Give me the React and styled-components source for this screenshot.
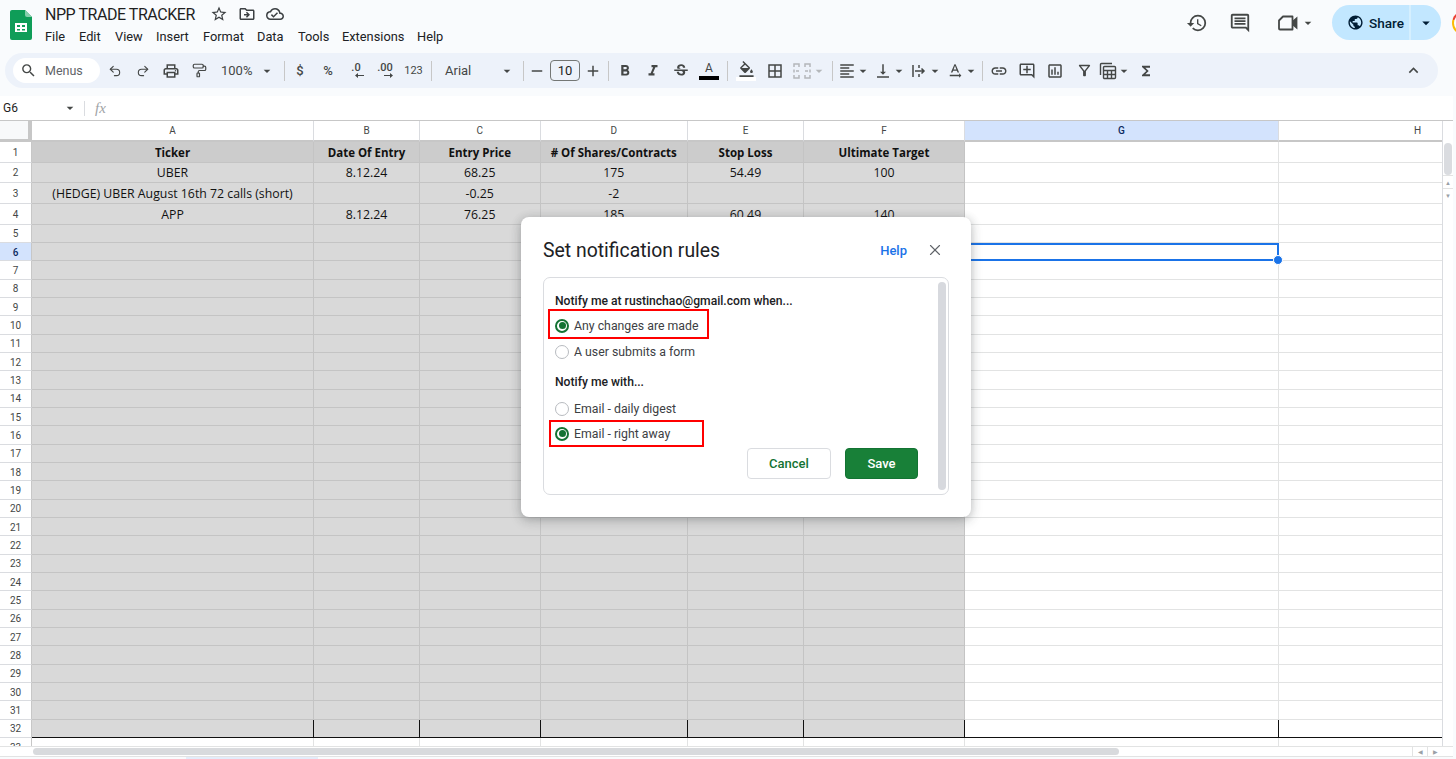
import React from 'react'
import styled, { createGlobalStyle } from 'styled-components'
import { Undo2, Redo2, PaintRoller, X } from 'lucide-react'
import {
  MdStarBorder, MdOutlineDriveFileMove, MdOutlineCloudDone, MdHistory, MdOutlineComment, MdPublic,
  MdSearch, MdOutlinePrint, MdArrowDropDown, MdAdd, MdRemove,
  MdFormatBold, MdFormatItalic, MdStrikethroughS, MdOutlineFormatColorFill, MdBorderAll,
  MdFormatAlignLeft, MdVerticalAlignBottom, MdTextRotationNone, MdLink, MdOutlineAddComment,
  MdOutlineInsertChart, MdOutlineFilterAlt, MdFunctions, MdExpandLess,
} from 'react-icons/md'

const GlobalStyle = createGlobalStyle`
  html, body { margin: 0; height: 100%; overflow: hidden; background: #f9fbfd; }
  #root { height: 100%; }
  * { box-sizing: border-box; }
`;

const Page = styled.div`
  width: 1456px;
  height: 759px;
  overflow: hidden;
  display: flex;
  flex-direction: column;
  background: #f9fbfd;
  font-family: Roboto, "Liberation Sans", sans-serif;
  color: #1f1f1f;
  position: relative;
`;

/* top header */
const Header = styled.header`
  height: 53px;
  flex: none;
  display: flex;
  padding-left: 10px;
`;
const LogoBox = styled.div`
  width: 22px;
  height: 30px;
  margin-top: 10px;
  flex: none;
`;
const DocInfo = styled.div`
  margin-left: 13px;
  display: flex;
  flex-direction: column;
`;
const TitleRow = styled.div`
  height: 28px;
  display: flex;
  align-items: center;
  color: #1f1f1f;
  svg { font-size: 18px; color: #3c4043; margin-left: 10px; }
`;
const Title = styled.div`
  font-size: 16px;
  width: 155px;
  white-space: nowrap;
  letter-spacing: -0.45px;
  padding-top: 1px;
`;
const MenuRow = styled.nav`
  display: flex;
  margin-top: 1px;
`;
const MenuItem = styled.div`
  font-size: 12.8px;
  line-height: 16px;
  width: ${p => p.$w}px;
  color: #202124;
`;
const HeaderRight = styled.div`
  margin-left: auto;
  margin-right: -20px;
  display: flex;
  align-items: flex-start;
  padding-top: 5px;
`;
const HeadIcon = styled.div`
  width: ${p => p.$w || 43}px;
  height: 35px;
  display: flex;
  align-items: center;
  justify-content: center;
  padding-left: ${p => p.$pl || 0}px;
  color: #444746;
  svg { font-size: 22px; }
  svg + svg { font-size: 16px; }
`;
const ShareBtn = styled.div`
  margin-left: 11px;
  width: 109px;
  height: 35px;
  display: flex;
  background: #c2e7ff;
  border-radius: 18px;
  overflow: hidden;
  color: #001d35;
`;
const ShareMain = styled.div`
  width: 79px;
  display: flex;
  align-items: center;
  padding-left: 15px;
  gap: 5px;
  font-size: 13.6px;
  font-weight: 500;
  border-right: 2px solid #d5effe;
  svg { font-size: 17px; }
`;
const ShareCaret = styled.div`
  flex: 1;
  display: flex;
  align-items: center;
  justify-content: center;
  svg { font-size: 18px; }
`;
const Avatar = styled.div`
  margin: 6px 0 0 11px;
  width: 24px;
  height: 24px;
  border-radius: 50%;
  background: conic-gradient(#4285f4 0 30%, #34a853 30% 60%, #fbbc04 60% 80%, #ea4335 80% 100%);
  display: flex;
  align-items: center;
  justify-content: center;
  &::after { content: ''; width: 20px; height: 20px; border-radius: 50%; background: #fff; }
`;

/* toolbar */
const Toolbar = styled.div`
  height: 35px;
  flex: none;
  margin: 0 18px 0 5px;
  padding: 0 11px 0 8px;
  background: #edf2fa;
  border-radius: 18px;
  display: flex;
  align-items: center;
  color: #444746;
`;
const MenuSearch = styled.div`
  width: 87px;
  height: 25px;
  margin-right: 1px;
  background: #fff;
  border-radius: 13px;
  display: flex;
  align-items: center;
  padding-left: 7px;
  gap: 8px;
  font-size: 12.5px;
  color: #5f6368;
  svg { font-size: 17px; color: #444746; }
`;
const Tool = styled.div`
  width: ${p => p.$w || 28}px;
  height: 24px;
  flex: none;
  display: flex;
  align-items: center;
  justify-content: center;
  font-size: ${p => p.$fs || 13}px;
  font-weight: ${p => p.$fw || 400};
  color: ${p => p.$muted ? '#b4b7ba' : '#444746'};
  svg { font-size: ${p => p.$icon || 18}px; }
`;
const DropTool = styled(Tool)`
  justify-content: flex-start;
  width: ${p => p.$w || 36}px;
  svg + svg { font-size: 16px; margin-left: -1px; }
`;
const Sep = styled.div`
  width: 1px;
  height: 20px;
  flex: none;
  background: #c7c7c7;
  margin-left: ${p => p.$l ?? 5}px;
  margin-right: ${p => p.$r ?? 1}px;
`;
const ZoomBox = styled.div`
  width: 66px;
  padding-left: 8px;
  display: flex;
  align-items: center;
  font-size: 13px;
  svg { font-size: 16px; margin-left: 7px; }
`;
const FontBox = styled.div`
  width: 85px;
  padding-left: 12px;
  display: flex;
  align-items: center;
  justify-content: space-between;
  padding-right: 3px;
  font-size: 13px;
  svg { font-size: 16px; }
`;
const SizeBox = styled.div`
  width: 30px;
  height: 21px;
  margin: 0 1px;
  border: 1px solid #747775;
  border-radius: 4px;
  font-size: 13px;
  display: flex;
  align-items: center;
  justify-content: center;
  color: #1f1f1f;
`;
const Decimal = styled.div`
  display: flex;
  flex-direction: column;
  align-items: center;
  font-size: 11px;
  font-weight: 500;
  line-height: 10px;
  svg { display: block; margin-left: 6px; }
`;
const ColorA = styled.div`
  width: 20px;
  display: flex;
  flex-direction: column;
  align-items: center;
  font-size: 12px;
  line-height: 13px;
  &::after { content: ''; width: 20px; height: 4px; background: #000; margin-top: 1px; }
`;
const FillWrap = styled.div`
  display: flex;
  flex-direction: column;
  align-items: center;
  svg { font-size: 17px; }
  &::after { content: ''; width: 20px; height: 4px; background: #fff; margin-top: -1px; }
`;
const Collapse = styled(Tool)`
  margin-left: auto;
  svg { font-size: 19px; }
`;

/* formula bar */
const FormulaBar = styled.div`
  margin-top: 8px;
  height: 24px;
  flex: none;
  background: #fff;
  display: flex;
  align-items: center;
  margin-right: 3px;
  font-size: 12px;
  color: #1f1f1f;
`;
const NameBox = styled.div`
  width: 84px;
  padding: 0 6px 0 3px;
  display: flex;
  align-items: center;
  justify-content: space-between;
  svg { font-size: 16px; color: #444746; }
`;
const FormulaSep = styled.div`
  width: 1px;
  height: 15px;
  background: #dadce0;
`;
const Fx = styled.div`
  margin-left: 10px;
  font-family: "Liberation Serif", serif;
  font-style: italic;
  font-size: 15px;
  color: #a0a3a6;
`;

/* sheet grid */
const Sheet = styled.div`
  flex: none;
  height: 626px;
  margin-right: 3px;
  display: flex;
  background: #fff;
  border-top: 1px solid #c7c7c7;
  overflow: hidden;
`;
const GridColumn = styled.div`
  width: 1442px;
  flex: none;
  overflow: hidden;
`;
const Row = styled.div`
  display: grid;
  grid-template-columns: 32px 282px 106px 120.5px 147.5px 116px 161px 314px 164px;
  height: ${p => p.$h}px;
`;
const Corner = styled.div`
  background: #f8f9fa;
  border-right: 4px solid #c7c7c7;
  border-bottom: 3px solid #c7c7c7;
`;
const ColHead = styled.div`
  background: ${p => p.$active ? '#d3e3fd' : '#fff'};
  color: ${p => p.$active ? '#0b2a5f' : '#444746'};
  font-weight: ${p => p.$active ? 500 : 400};
  border-right: 1px solid #dadce0;
  border-bottom: 2px solid #c7c7c7;
  padding-left: ${p => p.$offset || 0}px;
  font-size: 10px;
  display: flex;
  align-items: center;
  justify-content: center;
`;
const RowHead = styled.div`
  background: ${p => p.$active ? '#d3e3fd' : '#fff'};
  color: ${p => p.$active ? '#0b2a5f' : '#444746'};
  font-weight: ${p => p.$active ? 500 : 400};
  border-right: 1px solid #c7c7c7;
  border-bottom: 1px solid #dadce0;
  padding-top: 1px;
  font-size: 10px;
  display: flex;
  align-items: center;
  justify-content: center;
`;
const Cell = styled.div`
  position: relative;
  z-index: ${p => p.$selected ? 2 : 'auto'};
  background: ${p => p.$head ? '#cccccc' : p.$fill ? '#d9d9d9' : '#fff'};
  border-right: 1px solid ${p => p.$edge ? '#111' : p.$fill ? '#c4c4c4' : '#e2e3e3'};
  border-bottom: 1px solid ${p => p.$edge ? '#111' : p.$fill ? '#c4c4c4' : '#e2e3e3'};
  padding-top: 1px;
  font-family: "Open Sans", "Liberation Sans", sans-serif;
  font-size: ${p => p.$head ? 11.5 : 12.3}px;
  font-weight: ${p => p.$head ? 700 : 400};
  color: #111;
  display: flex;
  align-items: center;
  justify-content: center;
  white-space: nowrap;
`;
const Selection = styled.div`
  position: absolute;
  inset: 0 -1px -1px 0;
  border: 2px solid #1a73e8;
  &::after {
    content: '';
    position: absolute;
    right: -6px;
    bottom: -6px;
    width: 8px;
    height: 8px;
    border-radius: 50%;
    background: #1a73e8;
    border: 1px solid #fff;
  }
`;
const VScroll = styled.div`
  flex: 1;
  display: flex;
  flex-direction: column;
  border-left: 1px solid #dadce0;
  padding-top: 22px;
`;
const VThumb = styled.div`
  width: 8px;
  height: 32px;
  margin-left: 1px;
  border-radius: 4px;
  background: #dadce0;
`;
const VArrow = styled.div`
  height: 13px;
  width: 10px;
  display: flex;
  align-items: center;
  justify-content: center;
  border-top: 1px solid #e2e3e3;
  color: #9aa0a6;
  font-size: 6px;
  &:first-of-type { margin-top: auto; }
`;
const HScroll = styled.div`
  height: 11px;
  flex: none;
  margin-right: 3px;
  background: #fff;
  border-top: 1px solid #e2e3e3;
  border-bottom: 1px solid #e2e3e3;
  display: flex;
  align-items: center;
  padding-left: 33px;
`;
const HThumb = styled.div`
  width: 1086px;
  height: 7px;
  border-radius: 4px;
  background: #d8dadd;
`;
const HArrows = styled.div`
  margin-left: auto;
  display: flex;
  height: 100%;
  margin-right: 11px;
`;
const HArrow = styled.div`
  width: 15px;
  display: flex;
  align-items: center;
  justify-content: center;
  border-left: 1px solid #e2e3e3;
  color: #9aa0a6;
  font-size: 6px;
`;
const TabHint = styled.div`
  width: 132px;
  height: 2px;
  margin-left: 186px;
  background: #e3ecfa;
`;

/* dialog */
const Dialog = styled.div`
  position: absolute;
  z-index: 10;
  left: 521px;
  top: 217px;
  width: 450px;
  height: 300px;
  background: #fff;
  border-radius: 8px;
  box-shadow: 0 2px 10px rgba(60, 64, 67, .3), 0 4px 14px rgba(60, 64, 67, .12);
  padding: 0 22px;
  display: flex;
  flex-direction: column;
`;
const DialogHead = styled.div`
  height: 60px;
  flex: none;
  display: flex;
  align-items: center;
  padding-top: 6px;
`;
const DialogTitle = styled.div`
  font-size: 19.4px;
  color: #202124;
`;
const HelpLink = styled.div`
  margin-left: auto;
  font-size: 13px;
  font-weight: 500;
  color: #1a73e8;
`;
const CloseBtn = styled.div`
  margin-left: 19px;
  margin-right: 5px;
  height: 18px;
  color: #5f6368;
  svg { display: block; }
`;
const RulesBox = styled.div`
  position: relative;
  height: 218px;
  border: 1px solid #dadce0;
  border-radius: 7px;
  padding: 15px 11px 0;
  display: flex;
  flex-direction: column;
`;
const RulesScroll = styled.div`
  position: absolute;
  right: 2px;
  top: 4px;
  bottom: 4px;
  width: 8px;
  border-radius: 4px;
  background: #d7d9de;
`;
const GroupLabel = styled.div`
  font-size: 12.15px;
  font-weight: 500;
  line-height: 16px;
  color: #202124;
  margin-top: ${p => p.$mt || 0}px;
`;
const RadioRow = styled.div`
  width: ${p => p.$w}px;
  height: ${p => p.$h || 25}px;
  margin-top: ${p => p.$mt || 0}px;
  margin-left: ${p => p.$ml ? -p.$ml : -6}px;
  padding-left: ${p => p.$ml || 6}px;
  padding-top: ${p => p.$pt || 0}px;
  display: flex;
  align-items: center;
  gap: 5px;
  font-size: 12.3px;
  color: #3c4043;
  outline: ${p => p.$marked ? '2px solid #f00' : 'none'};
  outline-offset: -1px;
`;
const Radio = styled.span`
  width: 14px;
  height: 14px;
  flex: none;
  border-radius: 50%;
  border: ${p => p.$on ? '2px solid #137333' : '1px solid #b8bbbf'};
  background: #fff;
  display: flex;
  align-items: center;
  justify-content: center;
  &::after {
    content: '';
    width: 7px;
    height: 7px;
    border-radius: 50%;
    background: ${p => p.$on ? '#137333' : 'transparent'};
  }
`;
const Actions = styled.div`
  display: flex;
  justify-content: flex-end;
  gap: 14px;
  margin-top: 2px;
  padding-right: 19px;
`;
const Button = styled.div`
  height: 31px;
  width: ${p => p.$w}px;
  border-radius: 4px;
  display: flex;
  align-items: center;
  justify-content: center;
  font-size: 13px;
  font-weight: 500;
  background: ${p => p.$primary ? '#188038' : '#fff'};
  color: ${p => p.$primary ? '#fff' : '#137333'};
  border: 1px solid ${p => p.$primary ? '#137333' : '#dadce0'};
`;

const SheetsLogo = () => (
  <LogoBox>
    <svg width="22" height="30" viewBox="0 0 22 30">
      <path d="M2 0h13l7 7v21a2 2 0 0 1-2 2H2a2 2 0 0 1-2-2V2a2 2 0 0 1 2-2z" fill="#0f9d58" />
      <path d="M15 0l7 7h-5a2 2 0 0 1-2-2z" fill="#87ceac" />
      <path d="M5 13h12v9H5zm2 2v2h3v-2zm5 0v2h3v-2zm-5 4v1.500h3V19zm5 0v1.500h3V19z" fill="#fff" fillRule="evenodd" />
    </svg>
  </LogoBox>
);

const VideoIcon = () => (
  <svg width="24" height="24" viewBox="0 0 24 24" fill="none" stroke="currentColor" strokeWidth="1.800">
    <path d="M7 5.500h9.500v13H4a1 1 0 0 1-1-1v-8z" strokeLinejoin="round" />
    <path d="M17 10.500l3.500-3v9l-3.500-3z" fill="currentColor" />
  </svg>
);

const MergeIcon = () => (
  <svg width="18" height="18" viewBox="0 0 18 18" fill="none" stroke="currentColor" strokeWidth="1.500">
    <path d="M1 5V2h5v3M1 13v3h5v-3M12 5V2h5v3M12 13v3h5v-3M1 7.500v3M17 7.500v3M3 9h3M15 9h-3" />
  </svg>
);

const WrapIcon = () => (
  <svg width="18" height="18" viewBox="0 0 18 18" fill="none" stroke="currentColor" strokeWidth="1.500">
    <path d="M3 3v12M9 3v3M9 12v3M5 9h9M11.500 6.500L14 9l-2.500 2.500" />
  </svg>
);

const TableIcon = () => (
  <svg width="18" height="18" viewBox="0 0 18 18" fill="none" stroke="currentColor" strokeWidth="1.400">
    <path d="M1.500 13V2.500a1 1 0 0 1 1-1H13" />
    <rect x="4.500" y="4.500" width="12" height="12" rx="1" />
    <path d="M4.500 8.500h12M4.500 12.500h12M8.500 8.500v8M12.500 8.500v8" />
  </svg>
);

const ArrowLeft = () => (
  <svg width="9" height="5" viewBox="0 0 9 5" fill="currentColor"><path d="M0 2.500L3 0v2h6v1H3v2z" /></svg>
);
const ArrowRight = () => (
  <svg width="9" height="5" viewBox="0 0 9 5" fill="currentColor"><path d="M9 2.500L6 0v2H0v1h6v2z" /></svg>
);

const menus = [
  ['File', 34], ['Edit', 36], ['View', 41], ['Insert', 47], ['Format', 54],
  ['Data', 41], ['Tools', 44], ['Extensions', 75], ['Help', 40],
];
const columns = ['A', 'B', 'C', 'D', 'E', 'F', 'G', 'H'];
const sheetData = {
  1: ['Ticker', 'Date Of Entry', 'Entry Price', '# Of Shares/Contracts', 'Stop Loss', 'Ultimate Target'],
  2: ['UBER', '8.12.24', '68.25', '175', '54.49', '100'],
  3: ['(HEDGE) UBER August 16th 72 calls (short)', '', '-0.25', '-2', '', ''],
  4: ['APP', '8.12.24', '76.25', '185', '60.49', '140'],
};
const rowHeights = [21, 20.5, 21, 20.5];
const rows = Array.from({ length: 33 }, (_, i) => i + 1);

const App = () => {
  return (
    <Page>
      <GlobalStyle />
      <Header>
        <SheetsLogo />
        <DocInfo>
          <TitleRow>
            <Title>NPP TRADE TRACKER</Title>
            <MdStarBorder />
            <MdOutlineDriveFileMove />
            <MdOutlineCloudDone />
          </TitleRow>
          <MenuRow>
            {menus.map(([m, w]) => <MenuItem key={m} $w={w}>{m}</MenuItem>)}
          </MenuRow>
        </DocInfo>
        <HeaderRight>
          <HeadIcon><MdHistory /></HeadIcon>
          <HeadIcon><MdOutlineComment /></HeadIcon>
          <HeadIcon $w={60} $pl={10}><VideoIcon /><MdArrowDropDown /></HeadIcon>
          <ShareBtn>
            <ShareMain><MdPublic />Share</ShareMain>
            <ShareCaret><MdArrowDropDown /></ShareCaret>
          </ShareBtn>
          <Avatar />
        </HeaderRight>
      </Header>

      <Toolbar>
        <MenuSearch><MdSearch />Menus</MenuSearch>
        <Tool><Undo2 size={14} strokeWidth={1.9} /></Tool>
        <Tool><Redo2 size={14} strokeWidth={1.9} /></Tool>
        <Tool><MdOutlinePrint /></Tool>
        <Tool><PaintRoller size={15} strokeWidth={1.9} /></Tool>
        <ZoomBox>100%<MdArrowDropDown /></ZoomBox>
        <Sep />
        <Tool $fw={500}>$</Tool>
        <Tool $fw={500}>%</Tool>
        <Tool><Decimal>.0<ArrowLeft /></Decimal></Tool>
        <Tool $w={30}><Decimal>.00<ArrowRight /></Decimal></Tool>
        <Tool $w={27} $fs={11}>123</Tool>
        <Sep $l={4} />
        <FontBox>Arial<MdArrowDropDown /></FontBox>
        <Sep />
        <Tool $w={24}><MdRemove /></Tool>
        <SizeBox>10</SizeBox>
        <Tool $w={24}><MdAdd /></Tool>
        <Sep $l={3} $r={2} />
        <Tool><MdFormatBold /></Tool>
        <Tool><MdFormatItalic /></Tool>
        <Tool><MdStrikethroughS /></Tool>
        <Tool><ColorA>A</ColorA></Tool>
        <Sep $l={4} $r={3} />
        <Tool $w={30}><FillWrap><MdOutlineFormatColorFill /></FillWrap></Tool>
        <Tool><MdBorderAll /></Tool>
        <Tool $w={42} $muted><MergeIcon /><MdArrowDropDown size={16} /></Tool>
        <Sep $l={1} $r={5} />
        <DropTool><MdFormatAlignLeft /><MdArrowDropDown /></DropTool>
        <DropTool><MdVerticalAlignBottom /><MdArrowDropDown /></DropTool>
        <DropTool><WrapIcon /><MdArrowDropDown /></DropTool>
        <DropTool><MdTextRotationNone /><MdArrowDropDown /></DropTool>
        <Sep $l={0} $r={2} />
        <Tool><MdLink /></Tool>
        <Tool><MdOutlineAddComment /></Tool>
        <Tool><MdOutlineInsertChart /></Tool>
        <Tool $w={30} $icon={17}><MdOutlineFilterAlt /></Tool>
        <DropTool $w={33}><TableIcon /><MdArrowDropDown /></DropTool>
        <Tool $w={27} $icon={16}><MdFunctions /></Tool>
        <Collapse><MdExpandLess /></Collapse>
      </Toolbar>

      <FormulaBar>
        <NameBox>G6<MdArrowDropDown /></NameBox>
        <FormulaSep />
        <Fx>fx</Fx>
      </FormulaBar>

      <Sheet>
        <GridColumn>
          <Row $h={20.5}>
            <Corner />
            {columns.map(c => <ColHead key={c} $active={c === 'G'} $offset={c === 'H' ? 114 : 0}>{c}</ColHead>)}
          </Row>
          {rows.map(r => (
            <Row key={r} $h={rowHeights[r - 1] || 18.35}>
              <RowHead $active={r === 6}>{r}</RowHead>
              {columns.map((c, i) => (
                <Cell key={c} $head={r === 1 && i < 6} $fill={r < 33 && i < 6} $edge={r === 32} $selected={r === 6 && c === 'G'}>
                  {sheetData[r]?.[i]}
                  {r === 6 && c === 'G' && <Selection />}
                </Cell>
              ))}
            </Row>
          ))}
        </GridColumn>
        <VScroll>
          <VThumb />
          <VArrow>▲</VArrow>
          <VArrow>▼</VArrow>
        </VScroll>
      </Sheet>
      <HScroll>
        <HThumb />
        <HArrows>
          <HArrow>◀</HArrow>
          <HArrow>▶</HArrow>
        </HArrows>
      </HScroll>
      <TabHint />

      <Dialog>
        <DialogHead>
          <DialogTitle>Set notification rules</DialogTitle>
          <HelpLink>Help</HelpLink>
          <CloseBtn><X size={18} strokeWidth={1.5} /></CloseBtn>
        </DialogHead>
        <RulesBox>
          <GroupLabel>Notify me at rustinchao@gmail.com when...</GroupLabel>
          <RadioRow $w={159} $h={28} $mt={1} $pt={3} $marked><Radio $on />Any changes are made</RadioRow>
          <RadioRow $w={159} $mt={1}><Radio />A user submits a form</RadioRow>
          <GroupLabel $mt={10}>Notify me with...</GroupLabel>
          <RadioRow $w={159} $mt={6}><Radio />Email - daily digest</RadioRow>
          <RadioRow $w={153} $ml={5} $marked><Radio $on />Email - right away</RadioRow>
          <Actions>
            <Button $w={84}>Cancel</Button>
            <Button $w={73} $primary>Save</Button>
          </Actions>
          <RulesScroll />
        </RulesBox>
      </Dialog>
    </Page>
  );
};

export default App
